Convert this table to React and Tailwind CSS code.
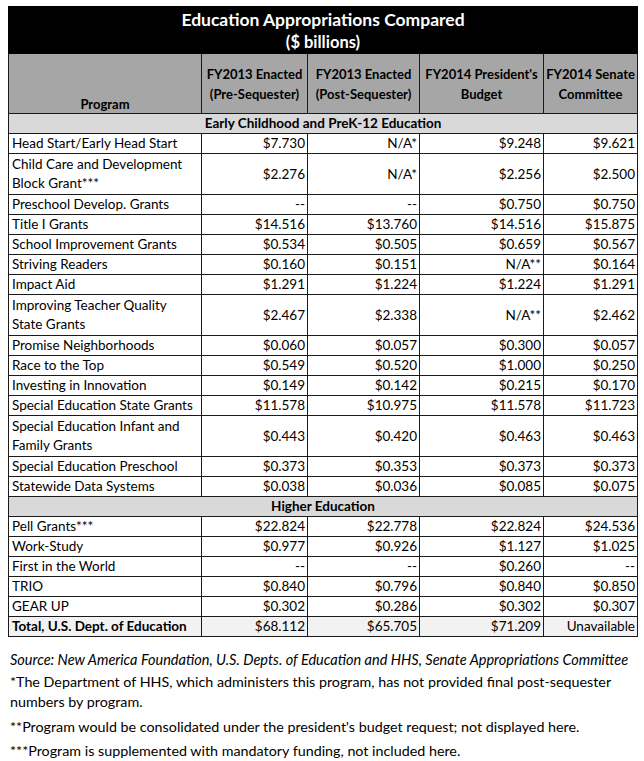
import React from 'react';

const font = { fontFamily: 'Lato, "Open Sans", sans-serif' };

const early = [
  ['Head Start/Early Head Start', '$7.730', 'N/A*', '$9.248', '$9.621'],
  [['Child Care and Development', 'Block Grant***'], '$2.276', 'N/A*', '$2.256', '$2.500'],
  ['Preschool Develop. Grants', '--', '--', '$0.750', '$0.750'],
  ['Title I Grants', '$14.516', '$13.760', '$14.516', '$15.875'],
  ['School Improvement Grants', '$0.534', '$0.505', '$0.659', '$0.567'],
  ['Striving Readers', '$0.160', '$0.151', 'N/A**', '$0.164'],
  ['Impact Aid', '$1.291', '$1.224', '$1.224', '$1.291'],
  [['Improving Teacher Quality', 'State Grants'], '$2.467', '$2.338', 'N/A**', '$2.462'],
  ['Promise Neighborhoods', '$0.060', '$0.057', '$0.300', '$0.057'],
  ['Race to the Top', '$0.549', '$0.520', '$1.000', '$0.250'],
  ['Investing in Innovation', '$0.149', '$0.142', '$0.215', '$0.170'],
  ['Special Education State Grants', '$11.578', '$10.975', '$11.578', '$11.723'],
  [['Special Education Infant and', 'Family Grants'], '$0.443', '$0.420', '$0.463', '$0.463'],
  ['Special Education Preschool', '$0.373', '$0.353', '$0.373', '$0.373'],
  ['Statewide Data Systems', '$0.038', '$0.036', '$0.085', '$0.075'],
];

const higher = [
  ['Pell Grants***', '$22.824', '$22.778', '$22.824', '$24.536'],
  ['Work-Study', '$0.977', '$0.926', '$1.127', '$1.025'],
  ['First in the World', '--', '--', '$0.260', '--'],
  ['TRIO', '$0.840', '$0.796', '$0.840', '$0.850'],
  ['GEAR UP', '$0.302', '$0.286', '$0.302', '$0.307'],
];

const cell = 'border border-[#1a1a1a] p-0 leading-[19px]';

const Row = ({ r }) => {
  const [name, a, b, c, d] = r;
  const tall = Array.isArray(name);
  return (
    <tr className={tall ? 'h-[41px]' : 'h-[19px]'}>
      <td className={`${cell} pl-[3px] text-left whitespace-nowrap`}>
        {tall ? <>{name[0]}<br />{name[1]}</> : name}
      </td>
      {[a, b, c, d].map((v, i) => (
        <td key={i} className={`${cell} pr-[2px] text-right`}>{v}</td>
      ))}
    </tr>
  );
};

const Section = ({ label }) => (
  <tr className="h-[19px] bg-[#d9d9d9]">
    <td colSpan={5} className={`${cell} text-center font-bold`}>{label}</td>
  </tr>
);

export default function App() {
  return (
    <div className="bg-white w-[644px] min-h-[761px] pt-[6px] pl-[8px] text-[13.5px] text-black" style={font}>
      <table className="table-fixed border-collapse w-[629px]">
        <colgroup>
          <col className="w-[193px]" />
          <col className="w-[106px]" />
          <col className="w-[112px]" />
          <col className="w-[124px]" />
          <col className="w-[94px]" />
        </colgroup>
        <thead>
          <tr className="bg-black text-white">
            <th colSpan={5} className="border border-black h-[47px] p-0 text-center font-bold">
              <div className="text-[17.5px] leading-[24px]">Education Appropriations Compared</div>
              <div className="text-[16.5px] leading-[21px]">($ billions)</div>
            </th>
          </tr>
          <tr className="bg-[#a6a6a6] h-[60px] font-bold text-[13px]">
            <th className="border border-[#1a1a1a] p-0 align-bottom leading-[18px]">Program</th>
            <th className="border border-[#1a1a1a] p-0 align-middle leading-[20px] text-center">FY2013 Enacted<br />(Pre-Sequester)</th>
            <th className="border border-[#1a1a1a] p-0 align-middle leading-[20px] text-center">FY2013 Enacted<br />(Post-Sequester)</th>
            <th className="border border-[#1a1a1a] p-0 align-middle leading-[20px] text-center">FY2014 President's<br />Budget</th>
            <th className="border border-[#1a1a1a] p-0 align-middle leading-[20px] text-center">FY2014 Senate<br />Committee</th>
          </tr>
        </thead>
        <tbody>
          <Section label="Early Childhood and PreK-12 Education" />
          {early.map((r) => <Row key={String(r[0])} r={r} />)}
          <Section label="Higher Education" />
          {higher.map((r) => <Row key={r[0]} r={r} />)}
          <tr className="h-[19px] bg-[#f2f2f2]">
            <td className={`${cell} pl-[3px] font-bold whitespace-nowrap`}>Total, U.S. Dept. of Education</td>
            <td className={`${cell} pr-[2px] text-right`}>$68.112</td>
            <td className={`${cell} pr-[2px] text-right`}>$65.705</td>
            <td className={`${cell} pr-[2px] text-right`}>$71.209</td>
            <td className={`${cell} pr-[2px] text-right`}>Unavailable</td>
          </tr>
        </tbody>
      </table>

      {/* notes under the table */}
      <div className="pl-[2px] pt-[13px] text-[14.3px] leading-[20px]">
        <p className="italic whitespace-nowrap text-[14.5px]">Source: New America Foundation, U.S. Depts. of Education and HHS, Senate Appropriations Committee</p>
        <p className="mt-[2px] pr-[30px]">*The Department of HHS, which administers this program, has not provided final post-sequester numbers by program.</p>
        <p className="mt-[5px]">**Program would be consolidated under the president's budget request; not displayed here.</p>
        <p className="mt-[4px]">***Program is supplemented with mandatory funding, not included here.</p>
      </div>
    </div>
  );
}
